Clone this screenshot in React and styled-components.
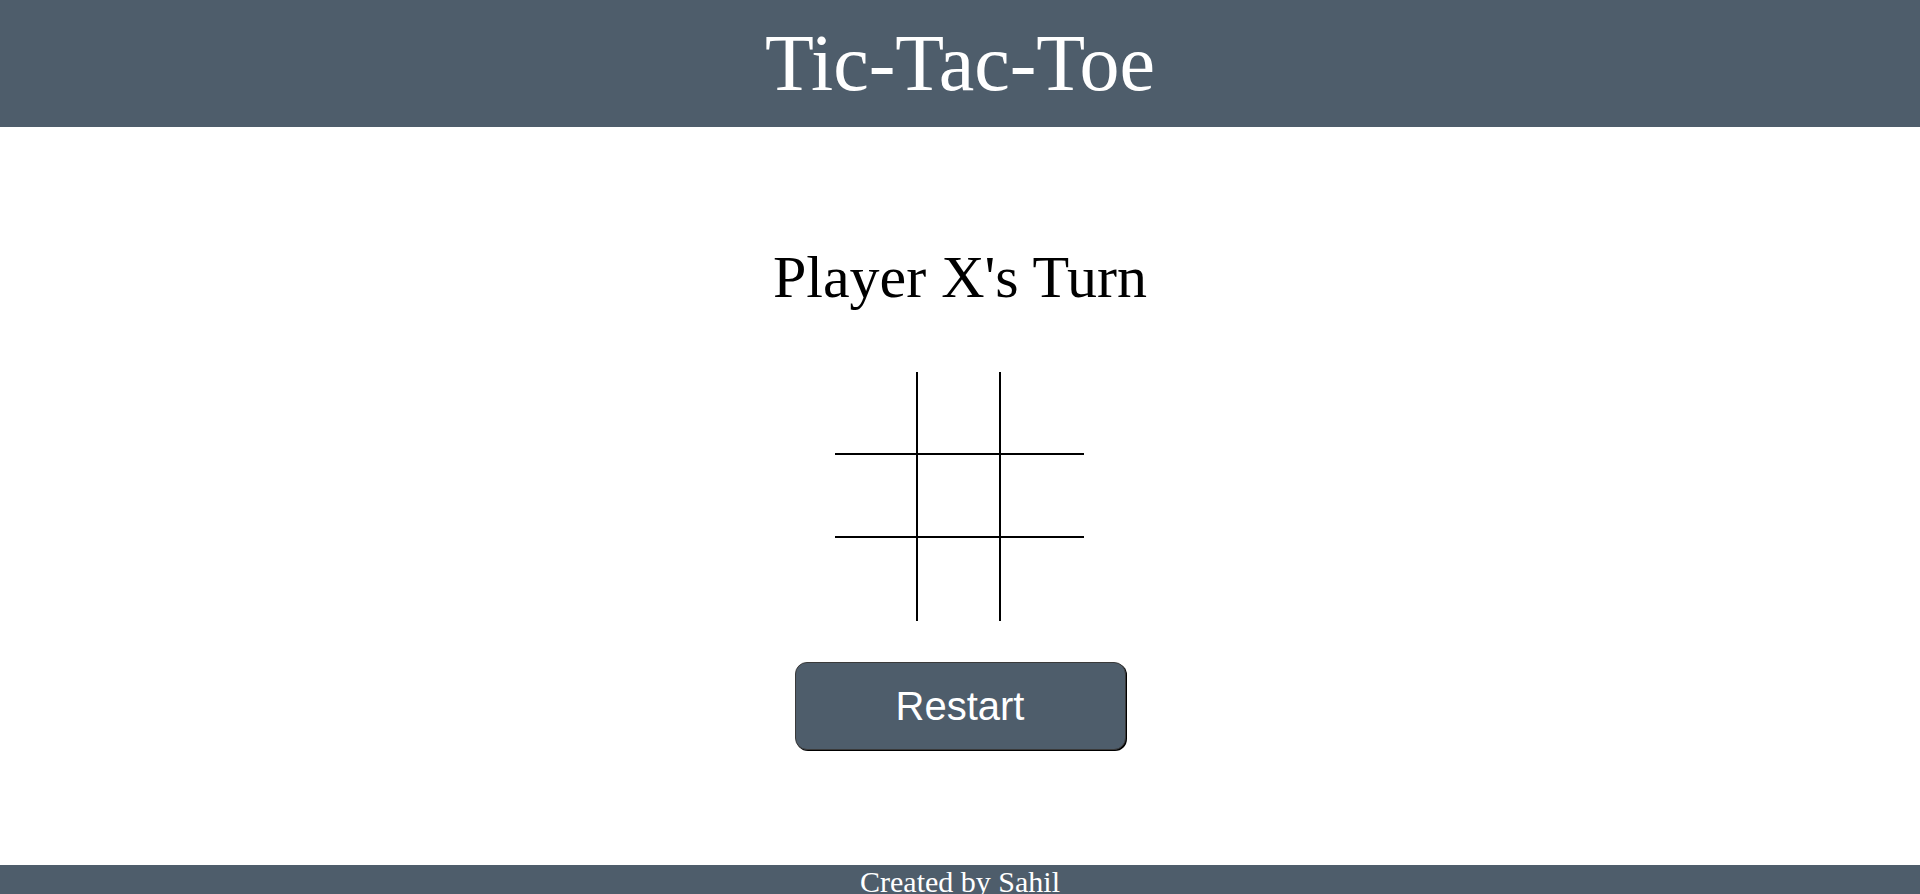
import React, {useState} from 'react';
import styled, {createGlobalStyle} from 'styled-components';

const GlobalStyle = createGlobalStyle`
  html, body {
    margin: 0;
    padding: 0;
    background: #ffffff;
    font-family: "Liberation Serif", "Times New Roman", serif;
  }
`;

const Page = styled.div`
  min-height: 100vh;
  display: grid;
  grid-template-rows: 127px 1fr 29px;
`;

const Header = styled.header`
  background: #4e5d6b;
  display: flex;
  align-items: center;
  justify-content: center;
`;

const Title = styled.h1`
  margin: 0;
  color: #ffffff;
  font-size: 80px;
  font-weight: normal;
`;

const Main = styled.main`
  display: flex;
  flex-direction: column;
  align-items: center;
  padding-top: 116px;
`;

const Status = styled.h2`
  margin: 0 0 60px;
  font-size: 60px;
  font-weight: normal;
  color: #000000;
`;

const Board = styled.div`
  display: grid;
  grid-template-columns: repeat(3, 83px);
  grid-template-rows: repeat(3, 83px);
  width: 250px;
  height: 250px;
`;

const Cell = styled.div`
  box-sizing: border-box;
  border-right: ${props => props.right ? '2px solid #000' : 'none'};
  border-bottom: ${props => props.bottom ? '2px solid #000' : 'none'};
  display: flex;
  align-items: center;
  justify-content: center;
  font-size: 60px;
  cursor: pointer;
`;

const RestartButton = styled.button`
  margin-top: 40px;
  width: 331px;
  height: 88px;
  box-sizing: border-box;
  background: #4e5d6b;
  color: #ffffff;
  border: 1px solid #3a3a3a;
  border-radius: 12px;
  box-shadow: 1px 1px 0 #000000;
  font-family: "Liberation Sans", Arial, sans-serif;
  font-size: 40px;
  cursor: pointer;
`;

const Footer = styled.footer`
  background: #4e5d6b;
  color: #ffffff;
  text-align: center;
  font-size: 30px;
  overflow: hidden;
`;

const App = () => {
    const [cells, setCells] = useState(Array(9).fill(''));
    const [player, setPlayer] = useState('X');

    const play = (i) => {
        if (cells[i]) return;
        const next = cells.slice();
        next[i] = player;
        setCells(next);
        setPlayer(player === 'X' ? 'O' : 'X');
    };

    const restart = () => {
        setCells(Array(9).fill(''));
        setPlayer('X');
    };

    return (
        <Page>
            <GlobalStyle/>
            <Header>
                <Title>Tic-Tac-Toe</Title>
            </Header>
            <Main>
                <Status>Player {player}'s Turn</Status>
                <Board>
                    {cells.map((c, i) => (
                        <Cell
                            key={i}
                            right={i % 3 !== 2}
                            bottom={i < 6}
                            onClick={() => play(i)}
                        >
                            {c}
                        </Cell>
                    ))}
                </Board>
                <RestartButton onClick={restart}>Restart</RestartButton>
            </Main>
            <Footer>Created by Sahil</Footer>
        </Page>
    );
};

export default App;
